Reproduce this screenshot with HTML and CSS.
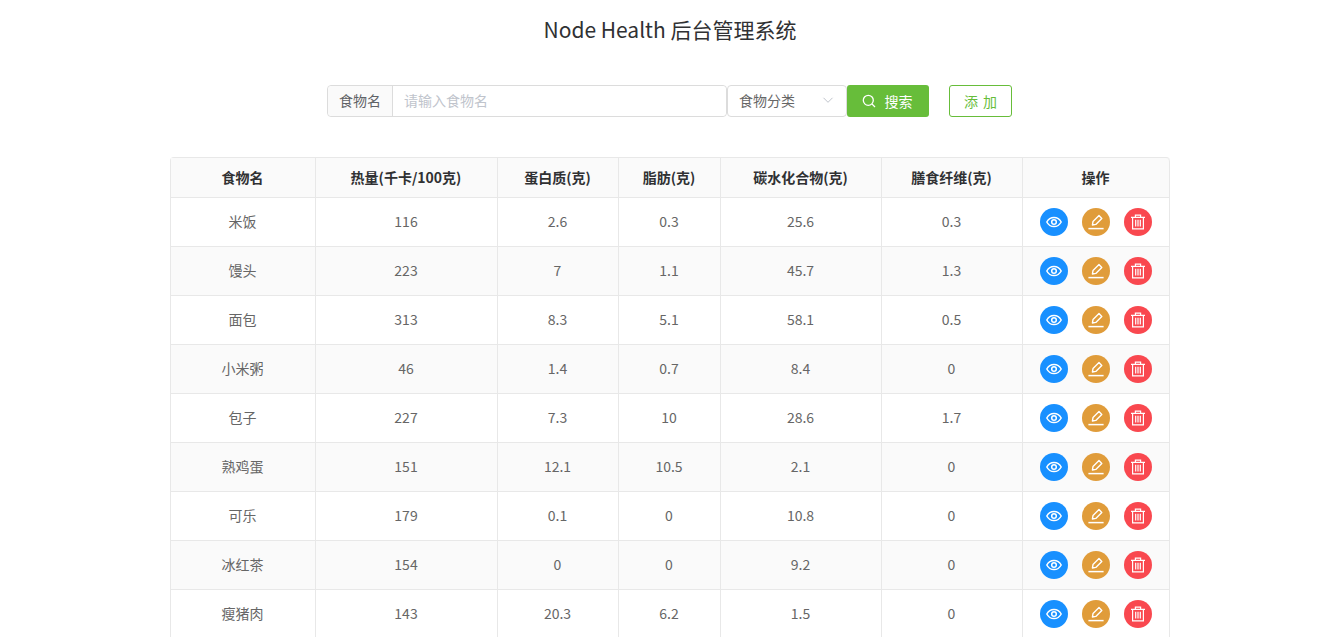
FILE: index.html
```html
<!DOCTYPE html>
<html lang="en">
<head>
  <meta charset="UTF-8" />
  <title>Node Health 后台管理系统</title>
  <link rel="stylesheet" href="styles.css">
</head>
<body>
  <svg class="icon-defs" width="0" height="0">
    <symbol id="i-eye" viewBox="0 0 16 16">
      <path d="M.8 8C2.4 5 5 3.4 8 3.400S13.600 5 15.200 8C13.600 11 11 12.600 8 12.600S2.400 11 .8 8Z" fill="none" stroke="currentColor" stroke-width="1.500"/>
      <circle cx="8" cy="8" r="2.300" fill="none" stroke="currentColor" stroke-width="1.500"/>
    </symbol>
    <symbol id="i-edit" viewBox="0 0 16 16">
      <path d="M4.400 11 5 7.600 11 1.600 13.800 4.400 7.800 10.400Z" fill="none" stroke="currentColor" stroke-width="1.400" stroke-linejoin="round"/>
      <path d="M.4 14.600H15.600" stroke="currentColor" stroke-width="1.500"/>
    </symbol>
    <symbol id="i-trash" viewBox="0 0 16 16">
      <path d="M1 3.400H15M5.400 3.200V1.200H10.600V3.200M2.600 3.400V14.800H13.400V3.400M5.700 5.800V12.600M8 5.800V12.600M10.300 5.800V12.600" fill="none" stroke="currentColor" stroke-width="1.200"/>
    </symbol>
  </svg>

  <div class="page">
    <h1 class="title">Node Health 后台管理系统</h1>

    <div class="toolbar">
      <div class="search-group">
        <span class="prepend">食物名</span>
        <input class="name-input" type="text" placeholder="请输入食物名">
      </div>
      <div class="select">
        <span>食物分类</span>
        <svg class="arrow" viewBox="0 0 12 12" width="12" height="12"><path d="M1.500 3.800 6 8.300 10.500 3.800" fill="none" stroke="#c0c4cc" stroke-width="1"/></svg>
      </div>
      <button class="btn-search">
        <svg viewBox="0 0 14 14" width="14" height="14"><circle cx="6.300" cy="6.300" r="5" fill="none" stroke="#fff" stroke-width="1.300"/><path d="M10 10 13 13" stroke="#fff" stroke-width="1.300"/></svg>
        <span>搜索</span>
      </button>
      <button class="btn-add">添 加</button>
    </div>

    <table class="food-table">
      <colgroup>
        <col class="c1"><col class="c2"><col class="c3"><col class="c4"><col class="c5"><col class="c6"><col class="c7">
      </colgroup>
      <thead>
        <tr><th>食物名</th><th>热量(千卡/100克)</th><th>蛋白质(克)</th><th>脂肪(克)</th><th>碳水化合物(克)</th><th>膳食纤维(克)</th><th>操作</th></tr>
      </thead>
      <tbody id="rows"></tbody>
    </table>
  </div>

  <script>
    const foods = [
      ["米饭", 116, 2.6, 0.3, 25.6, 0.3],
      ["馒头", 223, 7, 1.1, 45.7, 1.3],
      ["面包", 313, 8.3, 5.1, 58.1, 0.5],
      ["小米粥", 46, 1.4, 0.7, 8.4, 0],
      ["包子", 227, 7.3, 10, 28.6, 1.7],
      ["熟鸡蛋", 151, 12.1, 10.5, 2.1, 0],
      ["可乐", 179, 0.1, 0, 10.8, 0],
      ["冰红茶", 154, 0, 0, 9.2, 0],
      ["瘦猪肉", 143, 20.3, 6.2, 1.5, 0]
    ];

    const actions = `
      <div class="actions">
        <button class="circle blue"><svg width="16" height="16"><use href="#i-eye"/></svg></button>
        <button class="circle orange"><svg width="16" height="16"><use href="#i-edit"/></svg></button>
        <button class="circle red"><svg width="16" height="16"><use href="#i-trash"/></svg></button>
      </div>`;

    document.getElementById("rows").innerHTML = foods.map(row =>
      `<tr>${row.map(v => `<td class="text-cell">${v}</td>`).join("")}<td>${actions}</td></tr>`
    ).join("");
  </script>
</body>
</html>
```

FILE: styles.css
```css
* {
  box-sizing: border-box;
}

html, body {
  margin: 0;
  height: 100%;
  overflow: hidden;
}

body {
  font-family: "Noto Sans CJK SC", "Open Sans", sans-serif;
  font-size: 14px;
  color: #666;
  background: #fff;
}

.icon-defs {
  position: absolute;
}

.page {
  width: 1000px;
  margin-left: 170px;
}

.title {
  margin: 0;
  padding-top: 14px;
  height: 85px;
  font-size: 21px;
  line-height: 30px;
  font-weight: 400;
  text-align: center;
  color: #303133;
}

.toolbar {
  display: flex;
  align-items: stretch;
  height: 32px;
  margin-left: 157px;
}

.search-group {
  display: flex;
  width: 400px;
  border: 1px solid #dcdcdc;
  border-radius: 4px;
}

.prepend {
  width: 65px;
  flex: none;
  padding-bottom: 1px;
  background: #fafafa;
  border-right: 1px solid #dcdcdc;
  border-radius: 4px 0 0 4px;
  text-align: center;
  line-height: 28px;
  color: #606266;
}

.name-input {
  flex: 1;
  min-width: 0;
  border: none;
  outline: none;
  padding: 0 11px 2px;
  font: inherit;
  border-radius: 0 4px 4px 0;
}

.name-input::placeholder {
  color: #c0c4cc;
}

.select {
  display: flex;
  align-items: center;
  justify-content: space-between;
  width: 120px;
  padding: 0 12px 2px 11px;
  border: 1px solid #dcdcdc;
  border-radius: 4px;
  font-size: 14px;
}

.btn-search {
  display: flex;
  align-items: center;
  justify-content: center;
  gap: 9px;
  width: 82px;
  padding: 0 2px 1px 0;
  border: none;
  border-radius: 3px;
  background: #67bd3a;
  color: #fff;
  font: inherit;
  font-size: 14px;
}

.btn-add {
  width: 63px;
  margin-left: 20px;
  padding: 0 0 1px;
  border: 1px solid #67bd3a;
  border-radius: 3px;
  background: #fff;
  color: #67bd3a;
  font: inherit;
  font-size: 14px;
  word-spacing: 2px;
}

.food-table {
  width: 1000px;
  margin-top: 40px;
  border-collapse: separate;
  border-spacing: 0;
  table-layout: fixed;
  border-top: 1px solid #e8e8e8;
  border-left: 1px solid #e8e8e8;
  border-radius: 4px 4px 0 0;
  text-align: center;
}

.c1 { width: 145px; }
.c2 { width: 182px; }
.c3 { width: 121px; }
.c4 { width: 102px; }
.c5 { width: 161px; }
.c6 { width: 141px; }
.c7 { width: 147px; }

.food-table th,
.food-table td {
  padding: 0;
  border-right: 1px solid #e8e8e8;
  border-bottom: 1px solid #e8e8e8;
}

.food-table th {
  height: 40px;
  padding: 0 1px 2px 0;
  background: #fafafa;
  color: #303133;
  font-size: 14px;
  font-weight: 700;
}

.food-table th:last-child {
  border-top-right-radius: 4px;
}

.food-table td {
  height: 49px;
  font-size: 14px;
}

.food-table .text-cell {
  padding: 0 1px 2px 0;
}

.food-table tbody tr:nth-child(even) td {
  background: #fafafa;
}

.actions {
  display: flex;
  justify-content: center;
  gap: 14px;
}

.circle {
  display: flex;
  align-items: center;
  justify-content: center;
  width: 28px;
  height: 28px;
  padding: 0;
  border: none;
  border-radius: 50%;
  color: #fff;
}

.blue { background: #1890ff; }
.orange { background: #e09c3a; }
.red { background: #f9484f; }
```
